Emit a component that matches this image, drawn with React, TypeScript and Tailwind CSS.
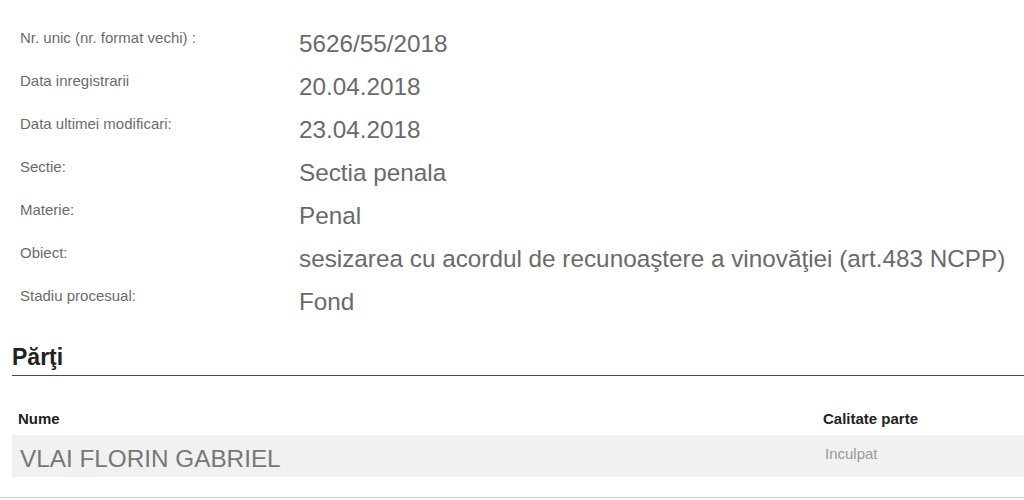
import React from 'react';

const details = [
  { label: 'Nr. unic (nr. format vechi) :', value: '5626/55/2018' },
  { label: 'Data inregistrarii', value: '20.04.2018' },
  { label: 'Data ultimei modificari:', value: '23.04.2018' },
  { label: 'Sectie:', value: 'Sectia penala' },
  { label: 'Materie:', value: 'Penal' },
  { label: 'Obiect:', value: 'sesizarea cu acordul de recunoaştere a vinovăţiei (art.483 NCPP)' },
  { label: 'Stadiu procesual:', value: 'Fond' },
];

const parti = [{ nume: 'VLAI FLORIN GABRIEL', calitate: 'Inculpat' }];

const App: React.FC = () => {
  return (
    <div className="w-[1024px] h-[500px] overflow-hidden bg-white font-['Liberation_Sans',Arial,sans-serif]">
      {/* Case details */}
      <div className="pt-[30px] pl-[20px]">
        {details.map((row) => (
          <div key={row.label} className="flex items-start h-[43px]">
            <div className="w-[279px] shrink-0 text-[15px] leading-[18px] text-[#6b6b6b] -mt-px">
              {row.label}
            </div>
            <div className="text-[24.3px] leading-[28px] text-[#6a6a6a] whitespace-nowrap">{row.value}</div>
          </div>
        ))}
      </div>

      {/* Parti */}
      <div className="ml-[12px] mt-[13px] pb-[5px] border-b border-[#4a4a4a]">
        <h2 className="text-[23px] leading-[26px] font-bold text-[#222]">Părţi</h2>
      </div>

      <div className="ml-[12px] mt-[34px]">
        <div className="flex h-[25px] text-[15px] leading-[18px] font-bold text-[#222]">
          <div className="flex-1 pl-[6px]">Nume</div>
          <div className="w-[201px]">Calitate parte</div>
        </div>
        {parti.map((p) => (
          <div key={p.nume} className="flex items-start h-[42px] bg-[#f1f1f1] pt-[10px]">
            <div className="flex-1 pl-[8px] text-[24.3px] leading-[28px] text-[#777]">{p.nume}</div>
            <div className="w-[199px] text-[15px] leading-[18px] text-[#999]">{p.calitate}</div>
          </div>
        ))}
      </div>

      <div className="mt-[20px] border-b border-[#cfcfcf]" />
    </div>
  );
};

export default App;
